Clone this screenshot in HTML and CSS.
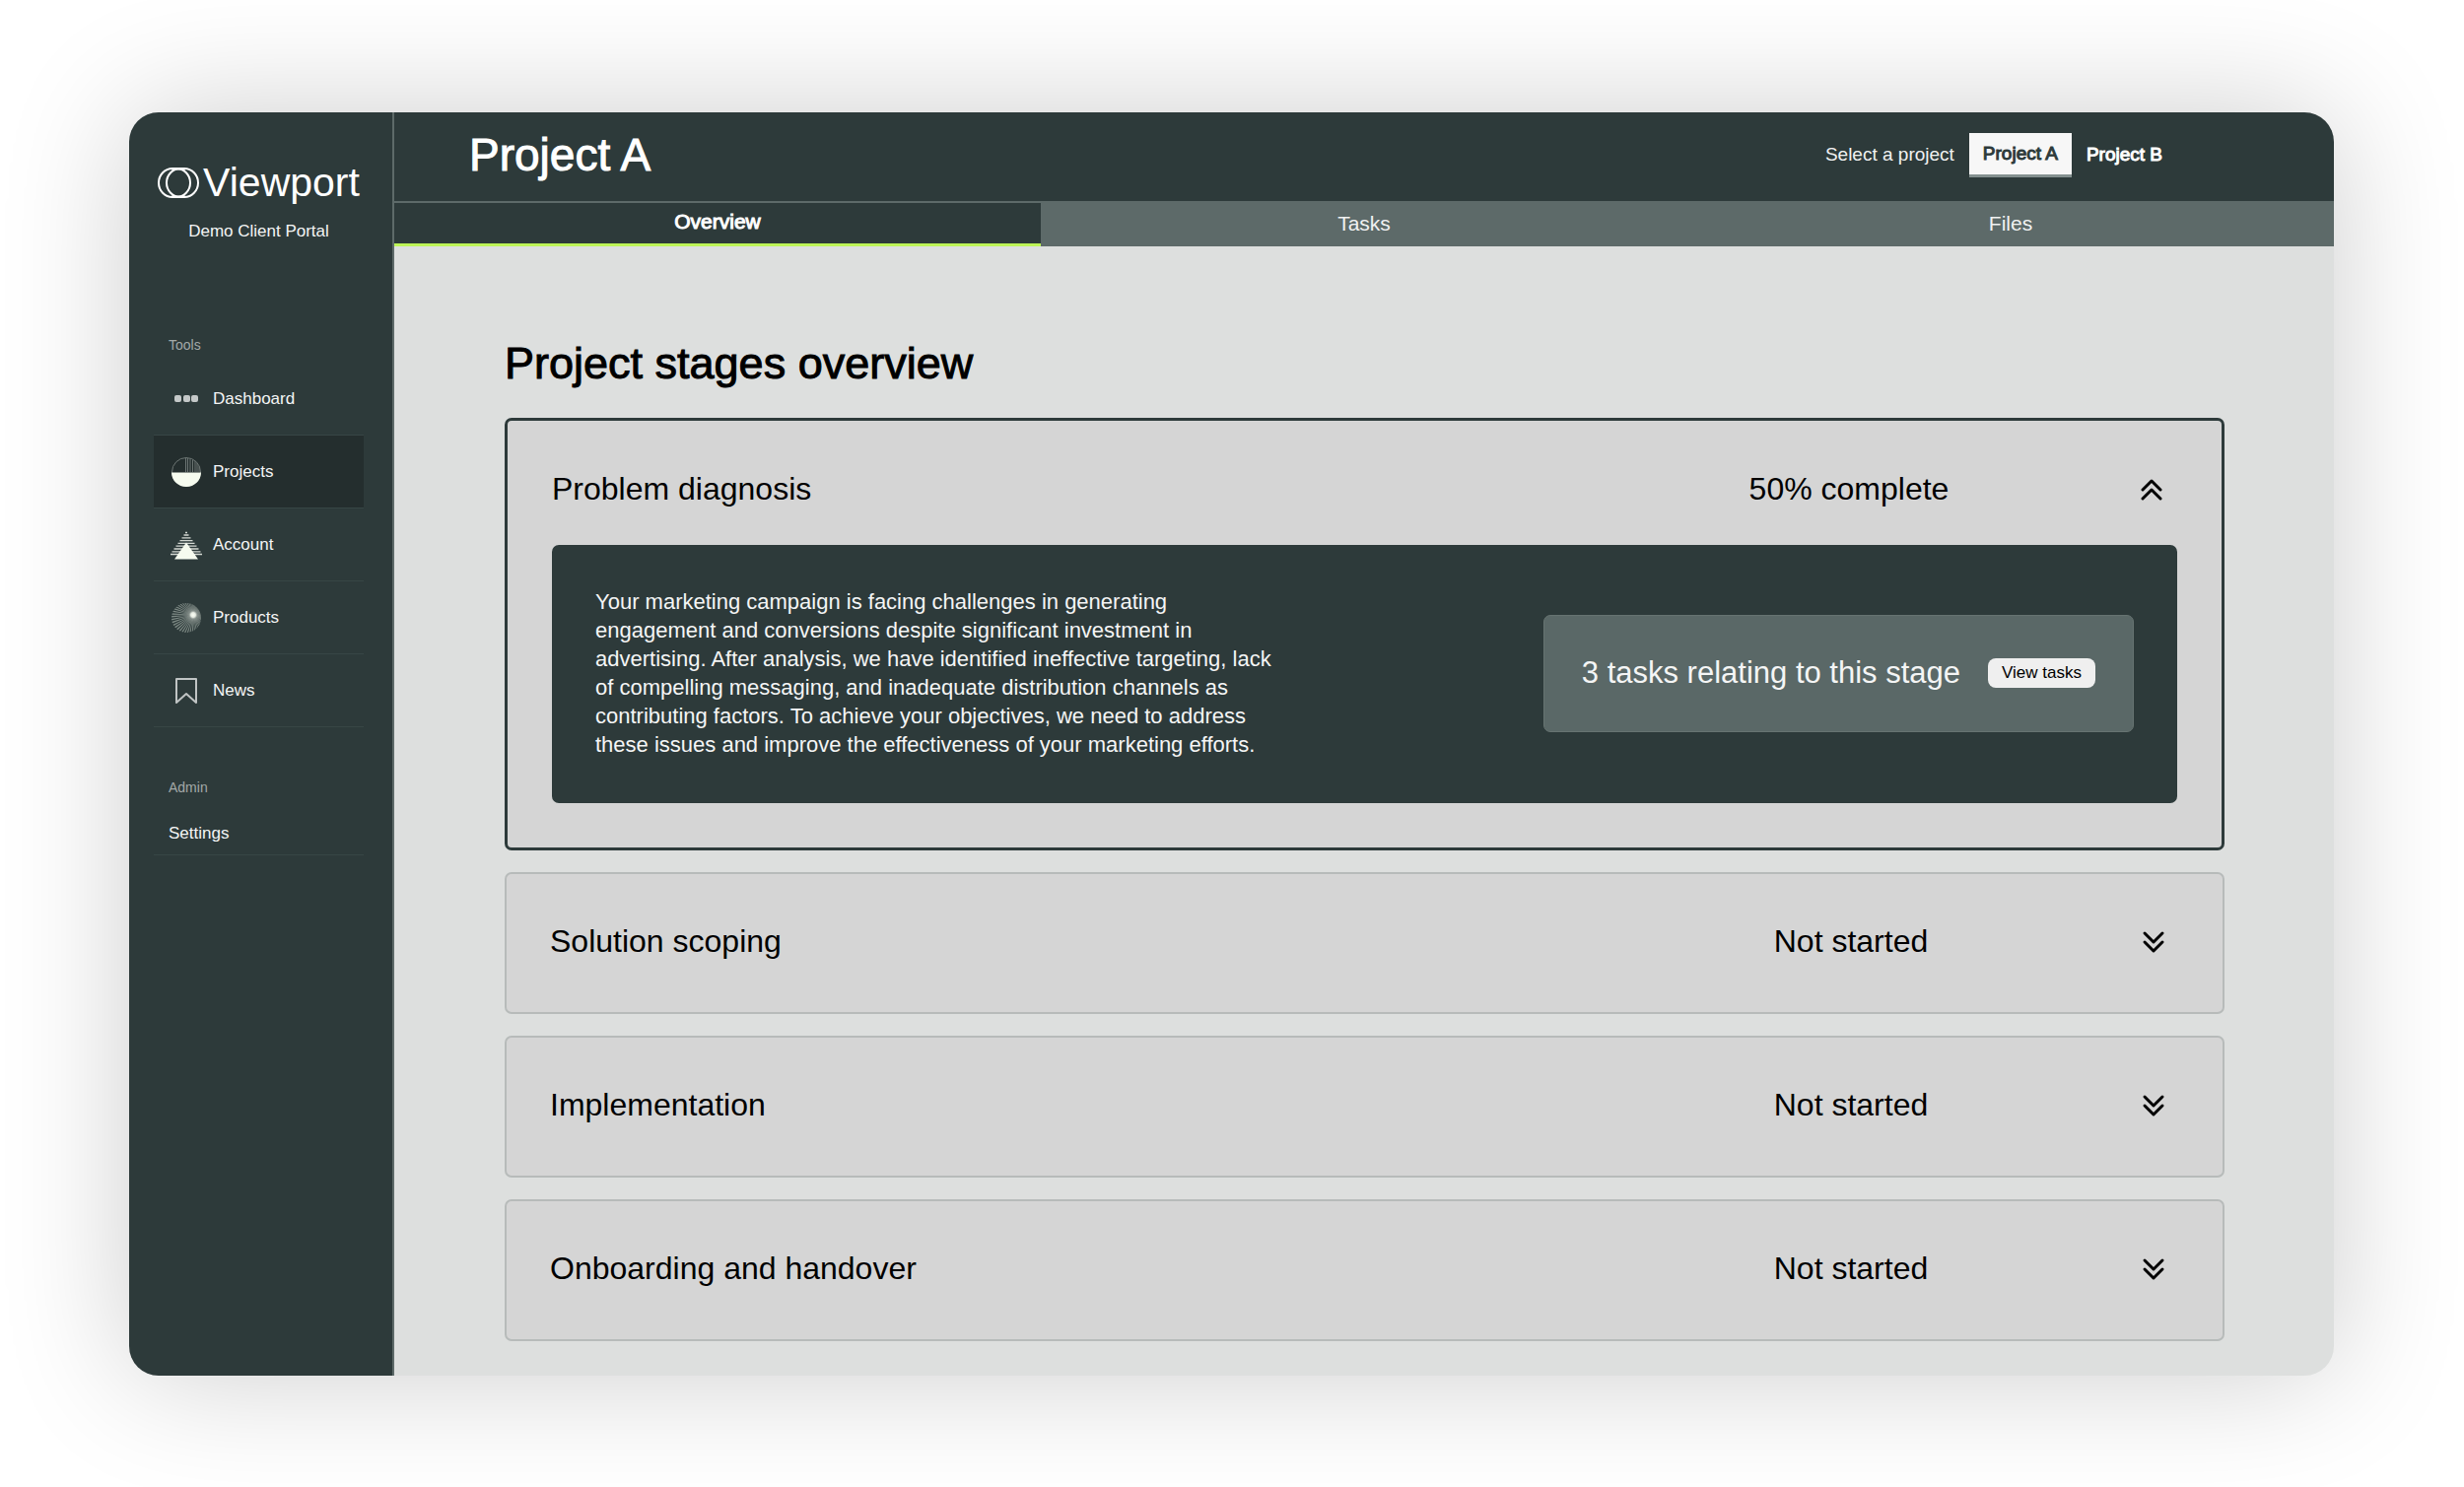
FILE: index.html
```html
<!DOCTYPE html>
<html lang="en">
<head>
    <meta charset="utf-8">
    <title>Viewport - Project A</title>
    <link rel="stylesheet" href="styles.css">
</head>
<body>
    <div class="window">
        <aside class="sidebar">
            <div class="brand">
                <svg class="logo" viewBox="0 0 42 31" fill="none" stroke="#fff" stroke-width="2">
                    <rect x="1" y="1" width="32" height="29" rx="14" ry="14.500"/>
                    <rect x="9" y="1" width="32" height="29" rx="14" ry="14.500"/>
                    <path d="M14 1.500h14M14 29.500h14"/>
                </svg>
                <span>Viewport</span>
            </div>
            <p class="portal-name">Demo Client Portal</p>

            <h2 class="nav-title">Tools</h2>
            <nav class="nav">
                <a href="#" class="nav-item">
                    <svg viewBox="0 0 34 34" fill="#c4c8c8">
                        <rect x="5" y="13" width="7" height="7" rx="2"/>
                        <rect x="14" y="13" width="7" height="7" rx="2"/>
                        <rect x="22" y="13" width="7" height="7" rx="2"/>
                    </svg>
                    Dashboard
                </a>
                <a href="#" class="nav-item selected">
                    <svg viewBox="0 0 34 34" fill="none" stroke="#6c7573">
                        <circle cx="17" cy="17" r="14.5"/>
                        <path d="M16.500 2.500V17M18.500 3V17M21 3.500V17M23.500 4.500V17M26 6V17M28 8V17M30 11V17"/>
                        <path d="M2 17.500h30a15 14.500 0 0 1-30 0z" fill="#f6fbef" stroke="none"/>
                    </svg>
                    Projects
                </a>
                <a href="#" class="nav-item">
                    <svg viewBox="0 0 34 34" stroke="#d3d8d2" stroke-width="1.300">
                        <path d="M16 4.500h2M14.500 7h5M12.500 9.800h9M10.500 12.600h13M8.500 15.400h17M6.500 18.200h21M4.500 21h25M2.500 23.800h29M1 26.500h32"/>
                        <path d="M17 14.500L29 31.500H5z" fill="#f6fbef" stroke="none"/>
                    </svg>
                    Account
                </a>
                <a href="#" class="nav-item">
                    <svg viewBox="0 0 34 34">
                        <defs>
                            <radialGradient id="glow" gradientUnits="userSpaceOnUse" cx="24" cy="14" r="12">
                                <stop offset="0" stop-color="#fbfff5"/>
                                <stop offset="0.200" stop-color="#e6ebe2"/>
                                <stop offset="0.350" stop-color="#929b96" stop-opacity="0.800"/>
                                <stop offset="1" stop-color="#6b7673" stop-opacity="0"/>
                            </radialGradient>
                            <clipPath id="ball"><circle cx="17" cy="17" r="15"/></clipPath>
                        </defs>
                        <g clip-path="url(#ball)">
                            <circle cx="24" cy="14" r="13" fill="none" stroke="#7d8984" stroke-width="26" stroke-dasharray="0.850 0.850"/>
                            <circle cx="24" cy="14" r="12" fill="url(#glow)"/>
                        </g>
                    </svg>
                    Products
                </a>
                <a href="#" class="nav-item">
                    <svg viewBox="0 0 34 34" fill="none" stroke="#c0c4c4" stroke-width="2" stroke-linejoin="round">
                        <path d="M7 5H27V29L17 20L7 29Z"/>
                    </svg>
                    News
                </a>
            </nav>

            <h2 class="nav-title admin-title">Admin</h2>
            <nav class="nav">
                <a href="#" class="nav-item small">Settings</a>
            </nav>
        </aside>

        <main class="main">
            <header class="header">
                <h1>Project A</h1>
                <div class="picker">
                    <span>Select a project</span>
                    <button type="button" class="picker-btn active">Project A</button>
                    <button type="button" class="picker-btn">Project B</button>
                </div>
            </header>
            <nav class="tabs">
                <a href="#" class="tab active">Overview</a>
                <a href="#" class="tab">Tasks</a>
                <a href="#" class="tab">Files</a>
            </nav>

            <section class="content">
                <h2>Project stages overview</h2>

                <div class="stage open">
                    <button type="button" class="stage-head" aria-expanded="true">
                        <span class="stage-name">Problem diagnosis</span>
                        <span class="stage-status">50% complete</span>
                        <svg class="chevron" viewBox="0 0 24 24"><path d="M3 13L12 4L21 13M3 22L12 13L21 22"/></svg>
                    </button>
                    <div class="stage-body">
                        <p>Your marketing campaign is facing challenges in generating engagement and conversions despite significant investment in advertising. After analysis, we have identified ineffective targeting, lack of compelling messaging, and inadequate distribution channels as contributing factors. To achieve your objectives, we need to address these issues and improve the effectiveness of your marketing efforts.</p>
                        <div class="stage-tasks">
                            <span>3 tasks relating to this stage</span>
                            <button type="button" class="view-btn">View tasks</button>
                        </div>
                    </div>
                </div>

                <div class="stage">
                    <button type="button" class="stage-head" aria-expanded="false">
                        <span class="stage-name">Solution scoping</span>
                        <span class="stage-status">Not started</span>
                        <svg class="chevron" viewBox="0 0 24 24"><path d="M3 3L12 12L21 3M3 12L12 21L21 12"/></svg>
                    </button>
                </div>

                <div class="stage">
                    <button type="button" class="stage-head" aria-expanded="false">
                        <span class="stage-name">Implementation</span>
                        <span class="stage-status">Not started</span>
                        <svg class="chevron" viewBox="0 0 24 24"><path d="M3 3L12 12L21 3M3 12L12 21L21 12"/></svg>
                    </button>
                </div>

                <div class="stage">
                    <button type="button" class="stage-head" aria-expanded="false">
                        <span class="stage-name">Onboarding and handover</span>
                        <span class="stage-status">Not started</span>
                        <svg class="chevron" viewBox="0 0 24 24"><path d="M3 3L12 12L21 3M3 12L12 21L21 12"/></svg>
                    </button>
                </div>
            </section>
        </main>
    </div>
</body>
</html>
```

FILE: styles.css
```css
* {
    box-sizing: border-box;
}

body {
    margin: 0;
    min-height: 100vh;
    padding: 114px 132px 113px 131px;
    display: flex;
    background-color: #fff;
    font-family: "Liberation Sans", Arial, sans-serif;
    font-size: 17px;
    color: #000;
}

h1, h2, p {
    margin: 0;
}

a {
    color: inherit;
    text-decoration: none;
}

button {
    border: none;
    padding: 0;
    background: none;
    font: inherit;
    color: inherit;
    cursor: pointer;
}

.window {
    flex: 1;
    display: flex;
    border-radius: 30px;
    overflow: hidden;
    background-color: #dddfde;
    box-shadow: 0 0 130px rgba(0, 0, 0, 0.2);
}

/* Sidebar */
.sidebar {
    width: 269px;
    flex-shrink: 0;
    padding: 48px 29px 0 25px;
    border-right: 2px solid #5d6a69;
    background-color: #2d3a3a;
    color: #f4f5f5;
}

.brand {
    display: flex;
    align-items: center;
    justify-content: center;
    gap: 4px;
    color: #fff;
    font-size: 41px;
    line-height: 46px;
}

.logo {
    width: 42px;
    height: 31px;
    flex-shrink: 0;
}

.portal-name {
    margin-top: 15px;
    line-height: 24px;
    text-align: center;
}

.nav-title {
    margin-top: 91px;
    margin-bottom: 6px;
    padding-left: 15px;
    font-size: 14px;
    font-weight: normal;
    line-height: 24px;
    color: #a3a9a8;
}

.admin-title {
    margin-top: 49px;
}

.nav-item {
    height: 74px;
    padding-left: 16px;
    display: flex;
    align-items: center;
    gap: 10px;
    border-bottom: 1px solid #374645;
}

.nav-item svg {
    width: 34px;
    height: 34px;
}

.nav-item.selected {
    background-color: #242e2e;
}

.nav-item.small {
    height: 51px;
    padding: 7px 15px 0;
}

/* Header */
.main {
    flex: 1;
    min-width: 0;
}

.header {
    height: 92px;
    padding: 0 174px 4px 76px;
    display: flex;
    align-items: center;
    justify-content: space-between;
    border-bottom: 2px solid #5d6a69;
    background-color: #2d3a3a;
    color: #fff;
}

.header h1 {
    font-size: 46px;
    font-weight: normal;
    -webkit-text-stroke: 1px;
}

.picker {
    display: flex;
    align-items: center;
    gap: 15px;
    font-size: 19px;
    color: #f0f1f1;
}

.picker-btn {
    color: #fff;
    -webkit-text-stroke: 1px;
}

.picker-btn.active {
    height: 45px;
    padding: 0 14px;
    border-bottom: 3px solid #84908f;
    background-color: #f7f7f7;
    color: #2d3a3a;
}

.tabs {
    display: flex;
    height: 44px;
    background-color: #5d6a69;
    color: #f0f1f1;
    font-size: 21px;
}

.tab {
    flex: 1;
    padding-bottom: 3px;
    display: flex;
    align-items: center;
    justify-content: center;
}

.tab.active {
    border-bottom: 3px solid #bdf458;
    background-color: #2d3a3a;
    color: #fff;
    -webkit-text-stroke: 1px;
}

/* Stages */
.content {
    padding: 92px 111px 33px 112px;
    display: flex;
    flex-direction: column;
    gap: 22px;
}

.content h2 {
    margin-bottom: 7px;
    font-size: 45px;
    font-weight: normal;
    line-height: 53px;
    -webkit-text-stroke: 1px;
}

.stage {
    border: 2px solid #b7bbba;
    border-radius: 7px;
    background-color: #d5d5d5;
    font-size: 32px;
}

.stage-head {
    width: 100%;
    height: 140px;
    padding: 0 44px 3px;
    display: grid;
    grid-template-columns: 1fr 400px 133px;
    align-items: center;
}

.stage-name {
    text-align: left;
}

.stage-status {
    text-align: center;
}

.chevron {
    width: 24px;
    height: 24px;
    justify-self: end;
    margin-right: 14px;
    fill: none;
    stroke: #000;
    stroke-width: 3;
    stroke-linecap: round;
    stroke-linejoin: round;
}

.stage.open {
    padding: 0 45px 45px;
    border: 3px solid #2d3a3a;
}

.stage.open .stage-head {
    height: 126px;
    padding: 12px 0 0;
}

.stage-body {
    padding: 43px 44px 45px;
    display: flex;
    align-items: center;
    justify-content: space-between;
    border-radius: 7px;
    background-color: #2d3a3a;
    color: #f4f5f5;
}

.stage-body p {
    width: 695px;
    font-size: 22px;
    line-height: 29px;
}

.stage-tasks {
    height: 119px;
    padding: 0 38px;
    display: flex;
    align-items: center;
    gap: 28px;
    border: 1px solid #667371;
    border-radius: 7px;
    background-color: #5a6867;
    font-size: 31px;
}

.view-btn {
    height: 30px;
    padding: 0 14px;
    border-radius: 8px;
    background-color: #efefef;
    color: #000;
    font-size: 17px;
}
```
